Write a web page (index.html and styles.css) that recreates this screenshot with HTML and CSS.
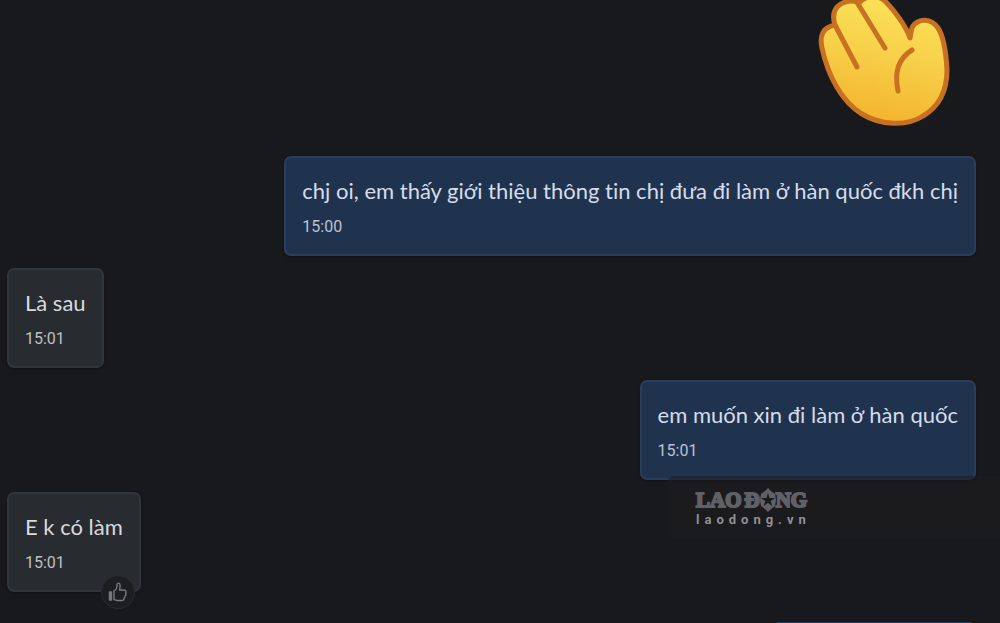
FILE: index.html
```html
<!DOCTYPE html>
<html lang="vi">

<head>
    <meta charset="UTF-8">
    <meta name="viewport" content="width=device-width, initial-scale=1.0">
    <title>Chat</title>
    <link rel="stylesheet" href="styles.css">
</head>

<body>
    <main class="chat">
        <div class="sticker">
            <svg viewBox="0 0 170 135" width="170" height="135" role="img" aria-label="wave">
                <defs>
                    <linearGradient id="skin" x1="0.6" y1="0" x2="0.4" y2="1">
                        <stop offset="0" stop-color="#fbe358"></stop>
                        <stop offset="0.45" stop-color="#f8d04a"></stop>
                        <stop offset="1" stop-color="#f3b32c"></stop>
                    </linearGradient>
                </defs>
                <g stroke="#c87122" stroke-width="5" stroke-linecap="round" stroke-linejoin="round">
                    <path fill="url(#skin)" d="M35 25C24 27 19 34 22 48C28 76 42 102 62 114C80 125 106 127 123 116C140 106 147 90 147 70C146 52 144 37 138 28C131 18 119 18 113 26C111 29 111 33 110 38C106 26 94 10 85 1C79 -5 65 -5 59 3C53 -1 43 1 37 7C33 12 33 19 35 25Z"></path>
                    <path fill="none" d="M35 25L57 67M58 4L85 48M112 50C99 58 94 72 98 91"></path>
                </g>
            </svg>
        </div>

        <div class="msg me">
            <p class="text">chj oi, em thấy giới thiệu thông tin chị đưa đi làm ở hàn quốc đkh chị</p>
            <time>15:00</time>
        </div>
        <div class="msg">
            <p class="text">Là sau</p>
            <time>15:01</time>
        </div>
        <div class="msg me">
            <p class="text">em muốn xin đi làm ở hàn quốc</p>
            <time>15:01</time>
        </div>
        <div class="msg last">
            <p class="text">E k có làm</p>
            <time>15:01</time>
            <button class="like" type="button" aria-label="Like">
                <svg viewBox="0 0 20 20" width="20" height="20" fill="none" stroke="#77787b" stroke-width="1.4" stroke-linejoin="round">
                    <path d="M6 9C8 8 9 6 9 3C9 0.500 12 0.500 12 3C12.300 5 12 6 11.500 8H16C18.500 8 18.500 10.500 17.500 11C18.500 12 18 13.500 17 14C17.500 15.500 16.500 16 16 16.200C16 18 15 18.500 14 18.500H9C7.500 18.500 7 17.500 6 17.500Z"></path>
                    <path d="M1.500 10H3.500V18H1.500Z" fill="#77787b"></path>
                </svg>
            </button>
        </div>
        <div class="msg me next"></div>
    </main>

    <div class="watermark">
        <div class="logo">
            <span>LAO</span>
            <span class="word">Đ<svg viewBox="0 0 16 24" width="16" height="24" role="img" aria-label="Ộ">
                    <path fill="#606166" fill-rule="evenodd" d="M8 0L11 3L15 6L16 12L15 18L11 21L8 24L5 21L1 18L0 12L1 6L5 3ZM8 5L6.400 10H1L5.300 13L3.600 18L8 15L12.400 18L10.700 13L15 10H9.600Z"></path>
                </svg>NG</span>
        </div>
        <div class="site">laodong.vn</div>
    </div>
</body>

</html>
```

FILE: styles.css
```css
* {
    margin: 0;
    padding: 0;
    box-sizing: border-box;
}

body {
    background-color: #18191d;
    font-family: Lato, "Noto Sans", sans-serif;
}

.chat {
    display: flex;
    flex-direction: column;
    align-items: flex-start;
    gap: 12px;
    height: 100vh;
    padding: 0 24px 0 7px;
    overflow: hidden;
}

.sticker {
    height: 144px;
    align-self: flex-end;
    margin-right: 6px;
    flex-shrink: 0;
}

.sticker svg {
    display: block;
}

.msg {
    position: relative;
    flex-shrink: 0;
    padding: 18px 16px 16px;
    border: 2px solid #2f343d;
    border-radius: 7px;
    background-color: #282b30;
    color: #d9dadc;
    box-shadow: 0 1px 2px #101114;
}

.me {
    align-self: flex-end;
    background-color: #20334e;
    border-color: #293e5c;
    color: #d5dcea;
}

.text {
    font-size: 22px;
    line-height: 30px;
    font-variant-ligatures: none;
}

time {
    display: block;
    margin-top: 10px;
    font-family: Roboto, sans-serif;
    font-size: 16px;
    line-height: 22px;
    opacity: 0.85;
}

.last {
    margin-bottom: 18px;
}

.next {
    width: 204px;
}

.like {
    position: absolute;
    right: 4px;
    bottom: -19px;
    width: 34px;
    height: 34px;
    display: flex;
    align-items: center;
    justify-content: center;
    border: 1px solid #2b2c30;
    border-radius: 50%;
    background-color: #1d1e22;
    cursor: pointer;
}

.watermark {
    position: absolute;
    right: 0;
    top: 476px;
    width: 333px;
    padding: 12px 0 10px 29px;
    border-radius: 8px 0 0 8px;
    background-color: rgba(30, 28, 32, 0.6);
}

.logo {
    display: flex;
    align-items: center;
    gap: 3px;
    height: 24px;
    color: #606166;
    font-family: "Liberation Serif", serif;
    font-size: 21px;
    font-weight: bold;
    -webkit-text-stroke: 2px #606166;
}

.word {
    display: flex;
    align-items: center;
}

.site {
    color: #909094;
    font-family: Roboto, sans-serif;
    font-size: 13px;
    font-weight: bold;
    line-height: 16px;
    letter-spacing: 5px;
}
```
